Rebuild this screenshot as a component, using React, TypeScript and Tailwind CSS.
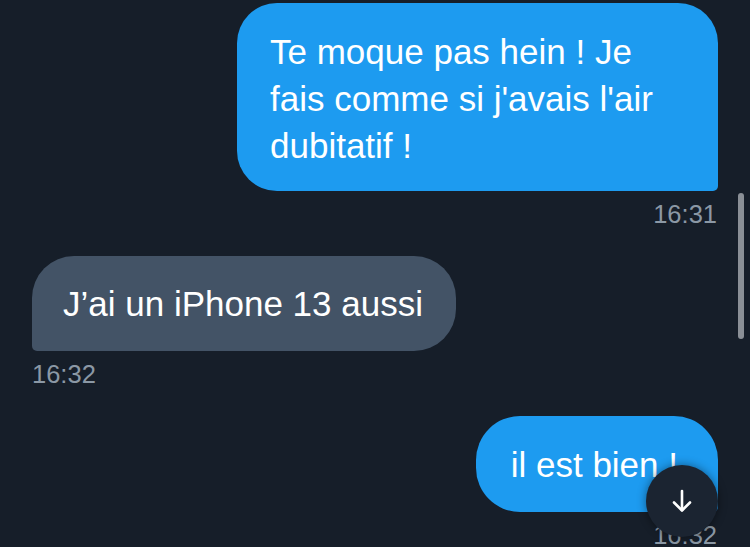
import React from "react";

export default function App() {
  const font = { fontFamily: '"Liberation Sans", Arial, sans-serif' };
  return (
    <div
      className="relative w-[750px] h-[547px] overflow-hidden bg-[#161e29] text-white"
      style={font}
    >
      <div className="flex flex-col pt-[3px] pl-[32px] pr-[32px]">
        {/* Message 1 (sent) */}
        <div className="flex justify-end">
          <div className="w-[481px] h-[188px] rounded-[40px] rounded-br-[5px] bg-[#1d9bf0] pl-[33px] pr-[20px] pt-[25px] text-[35px] leading-[47px] text-white">
            Te moque pas hein ! Je
            <br />
            fais comme si j'avais l'air
            <br />
            dubitatif !
          </div>
        </div>
        <div className="mt-[9px] flex justify-end pr-[1px] text-[25.5px] leading-[28px] text-[#8b98a5]">
          16:31
        </div>

        {/* Message 2 (received) */}
        <div className="mt-[28px] flex justify-start">
          <div className="h-[95px] rounded-[42px] rounded-bl-[5px] bg-[#435366] pl-[31px] pr-[33px] flex items-center text-[35px] leading-[47px] text-white">
            J’ai un iPhone 13 aussi
          </div>
        </div>
        <div className="mt-[9px] flex justify-start text-[25.5px] leading-[28px] text-[#8b98a5]">
          16:32
        </div>

        {/* Message 3 (sent) */}
        <div className="mt-[28px] flex justify-end">
          <div className="h-[96px] rounded-[44px] rounded-br-[5px] bg-[#1d9bf0] pl-[35px] pr-[40px] flex items-center text-[35px] leading-[47px] text-white">
            il est bien !
          </div>
        </div>
        <div className="mt-[9px] flex justify-end pr-[1px] text-[25.5px] leading-[28px] text-[#8b98a5]">
          16:32
        </div>
      </div>

      {/* Scrollbar */}
      <div className="absolute left-[738px] top-[193px] w-[6px] h-[146px] rounded-full bg-[#8a8f96]" />

      {/* Scroll-to-bottom button */}
      <div className="absolute left-[646px] top-[465px] w-[72px] h-[72px] rounded-full bg-[#1b2431] shadow-[0_0_10px_rgba(0,0,0,0.45)] flex items-center justify-center">
        <svg width="22" height="24" viewBox="0 0 22 24" fill="none" stroke="white" strokeWidth="2.6" strokeLinecap="round" strokeLinejoin="round">
          <path d="M11 2 V21" />
          <path d="M3 13.5 L11 21.5 L19 13.5" />
        </svg>
      </div>
    </div>
  );
}
